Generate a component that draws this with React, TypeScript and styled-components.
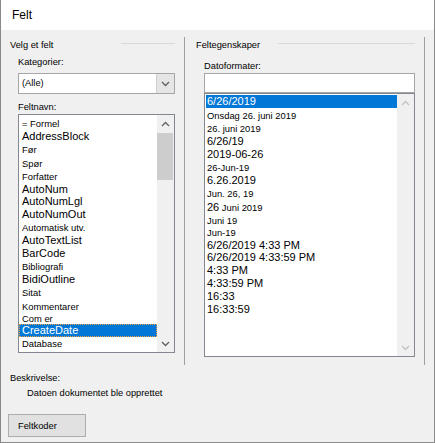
import React from "react";
import styled, { createGlobalStyle } from "styled-components";

const GlobalStyle = createGlobalStyle`
  html, body {
    margin: 0;
    padding: 0;
    background: #f0f0f0;
  }
  body {
    font-family: "Liberation Sans", Arial, sans-serif;
    color: #000;
  }
`;

type Item = { text: React.ReactNode; big?: boolean; h: number; selected?: boolean };

const fieldNames: Item[] = [
    { text: "= Formel", h: 12 },
    { text: "AddressBlock", big: true, h: 13 },
    { text: "Før", h: 14 },
    { text: "Spør", h: 13 },
    { text: "Forfatter", h: 13 },
    { text: "AutoNum", big: true, h: 12 },
    { text: "AutoNumLgl", big: true, h: 12 },
    { text: "AutoNumOut", big: true, h: 14 },
    { text: "Automatisk utv.", h: 13 },
    { text: "AutoTextList", big: true, h: 12 },
    { text: "BarCode", big: true, h: 14 },
    { text: "Bibliografi", h: 13 },
    { text: "BidiOutline", big: true, h: 13 },
    { text: "Sitat", h: 14 },
    { text: "Kommentarer", h: 13 },
    { text: "Com er", h: 11 },
    { text: "CreateDate", big: true, h: 13, selected: true },
    { text: "Database", h: 14 },
];

const dateFormats: Item[] = [
    { text: "6/26/2019", big: true, h: 13, selected: true },
    { text: "Onsdag 26. juni 2019", h: 15 },
    { text: "26. juni 2019", h: 12 },
    { text: "6/26/19", big: true, h: 12 },
    { text: "2019-06-26", big: true, h: 14 },
    { text: "26-Jun-19", h: 13 },
    { text: "6.26.2019", big: true, h: 13 },
    { text: "Jun. 26, 19", h: 13 },
    { text: <>26<SmallPart> Juni 2019</SmallPart></>, big: true, h: 14 },
    { text: "Juni 19", h: 13 },
    { text: "Jun-19", h: 12 },
    { text: "6/26/2019 4:33 PM", big: true, h: 12 },
    { text: "6/26/2019 4:33:59 PM", big: true, h: 13 },
    { text: "4:33 PM", big: true, h: 13 },
    { text: "4:33:59 PM", big: true, h: 13 },
    { text: "16:33", big: true, h: 13 },
    { text: "16:33:59", big: true, h: 13 },
];

function SmallPart({ children }: { children: React.ReactNode }) {
    return <Small>{children}</Small>;
}

const Chevron: React.FC<{ up?: boolean; color: string }> = ({ up, color }) => (
    <svg width="9" height="6" viewBox="0 0 9 6">
        <polyline
            points={up ? "1,5 4.5,1.5 8,5" : "1,1 4.5,4.5 8,1"}
            fill="none"
            stroke={color}
            strokeWidth="1.3"
        />
    </svg>
);

const App: React.FC = () => {
    return (
        <>
            <GlobalStyle/>
            <Window>
                <TitleBar>Felt</TitleBar>
                <Body>
                    <GroupRow>
                        <LeftGroup>
                            <GroupHeader>
                                <span>Velg et felt</span>
                                <HeaderLine $gap={68}/>
                            </GroupHeader>
                            <Field>
                                <Label $top={2}>Kategorier:</Label>
                                <Select>
                                    <SelectValue>(Alle)</SelectValue>
                                    <DropButton>
                                        <Chevron color="#606060"/>
                                    </DropButton>
                                </Select>
                                <Label $top={6}>Feltnavn:</Label>
                                <ListBox $height={239}>
                                    <Rows $padTop={3} $padLeft={0}>
                                        {fieldNames.map((item, i) => (
                                            <Row key={i} $h={item.h} $big={item.big} $selected={item.selected} $padLeft={3} $focus>
                                                {item.text}
                                            </Row>
                                        ))}
                                    </Rows>
                                    <ScrollBar>
                                        <ArrowBox><Chevron up color="#606060"/></ArrowBox>
                                        <Thumb/>
                                        <Spacer/>
                                        <ArrowBox><Chevron color="#606060"/></ArrowBox>
                                    </ScrollBar>
                                </ListBox>
                            </Field>
                        </LeftGroup>
                        <RightGroup>
                            <GroupHeader>
                                <span>Feltegenskaper</span>
                                <HeaderLine $gap={18}/>
                            </GroupHeader>
                            <Field>
                                <Label $top={6}>Datoformater:</Label>
                                <TextInput/>
                                <ListBox $height={264}>
                                    <Rows $padTop={1} $padLeft={1}>
                                        {dateFormats.map((item, i) => (
                                            <Row key={i} $h={item.h} $big={item.big} $selected={item.selected} $padLeft={1}>
                                                {item.text}
                                            </Row>
                                        ))}
                                    </Rows>
                                    <ScrollBar>
                                        <ArrowBox><Chevron up color="#c2c2c2"/></ArrowBox>
                                        <Spacer/>
                                        <ArrowBox><Chevron color="#c2c2c2"/></ArrowBox>
                                    </ScrollBar>
                                </ListBox>
                            </Field>
                        </RightGroup>
                    </GroupRow>
                    <DescLabel>Beskrivelse:</DescLabel>
                    <DescText>Datoen dokumentet ble opprettet</DescText>
                    <FieldCodesButton>Feltkoder</FieldCodesButton>
                </Body>
            </Window>
        </>
    );
};

const Window = styled.div`
  width: 435px;
  height: 443px;
  box-sizing: border-box;
  border: 1px solid #8a8a8a;
  border-top: 0;
  background: #f0f0f0;
  display: flex;
  flex-direction: column;
  overflow: hidden;
`;

const TitleBar = styled.div`
  height: 30px;
  flex-shrink: 0;
  background: #fff;
  padding-left: 11px;
  font-size: 12px;
  line-height: 30px;
`;

const Body = styled.div`
  padding-top: 7px;
  display: flex;
  flex-direction: column;
  font-size: 9.3px;
`;

const GroupRow = styled.div`
  display: flex;
  height: 328px;
  padding-left: 9px;
`;

const LeftGroup = styled.div`
  width: 175px;
  box-sizing: border-box;
  padding-right: 9px;
  border-right: 1px solid #a0a0a0;
`;

const RightGroup = styled.div`
  width: 240px;
  box-sizing: border-box;
  padding-left: 11px;
  padding-right: 9px;
  border-right: 1px solid #a0a0a0;
`;

const GroupHeader = styled.div`
  display: flex;
  height: 16px;
  line-height: 16px;
`;

const HeaderLine = styled.div<{ $gap: number }>`
  flex: 1;
  height: 1px;
  margin-top: 6px;
  margin-left: ${p => p.$gap}px;
  background: #d9d9d9;
`;

const Field = styled.div`
  display: flex;
  flex-direction: column;
  padding-left: 8px;
`;

const Label = styled.div<{ $top: number }>`
  height: 14px;
  line-height: 14px;
  margin-top: ${p => p.$top}px;
`;

const Select = styled.div`
  display: flex;
  height: 21px;
  margin-top: 4px;
  box-sizing: border-box;
  border: 1px solid #a6a6a6;
  background: #fff;
`;

const SelectValue = styled.div`
  flex: 1;
  padding-left: 3px;
  line-height: 19px;
`;

const DropButton = styled.div`
  width: 17px;
  background: #e5e5e5;
  border-left: 1px solid #d0d0d0;
  display: flex;
  align-items: center;
  justify-content: center;
`;

const TextInput = styled.div`
  height: 20px;
  box-sizing: border-box;
  border: 1px solid #a6a6a6;
  background: #fff;
`;

const ListBox = styled.div<{ $height: number }>`
  display: flex;
  height: ${p => p.$height}px;
  box-sizing: border-box;
  border: 1px solid #828790;
  background: #fff;
  overflow: hidden;
`;

const Rows = styled.div<{ $padTop: number; $padLeft: number }>`
  flex: 1;
  min-width: 0;
  padding-top: ${p => p.$padTop}px;
  padding-left: ${p => p.$padLeft}px;
  overflow: hidden;
`;

const Row = styled.div<{ $h: number; $big?: boolean; $selected?: boolean; $padLeft: number; $focus?: boolean }>`
  height: ${p => p.$h}px;
  line-height: ${p => p.$h}px;
  padding-left: ${p => p.$padLeft}px;
  box-sizing: border-box;
  white-space: nowrap;
  font-size: ${p => (p.$big ? 11 : 9.4)}px;
  background: ${p => (p.$selected ? "#0078d7" : "transparent")};
  color: ${p => (p.$selected ? "#fff" : "#000")};
  outline: ${p => (p.$selected && p.$focus ? "1px dotted #f5a040" : "none")};
  outline-offset: -1px;
`;

const Small = styled.span`
  font-size: 9.4px;
`;

const ScrollBar = styled.div`
  width: 17px;
  flex-shrink: 0;
  background: #f0f0f0;
  display: flex;
  flex-direction: column;
`;

const ArrowBox = styled.div`
  height: 17px;
  flex-shrink: 0;
  display: flex;
  align-items: center;
  justify-content: center;
`;

const Thumb = styled.div`
  height: 47px;
  margin: 1px 1px 0 0;
  background: #cdcdcd;
`;

const Spacer = styled.div`
  flex: 1;
`;

const DescLabel = styled.div`
  margin-top: 6px;
  padding-left: 9px;
  height: 14px;
  line-height: 14px;
`;

const DescText = styled.div`
  margin-top: 1px;
  padding-left: 26px;
  height: 14px;
  line-height: 14px;
`;

const FieldCodesButton = styled.button`
  margin: 14px 0 0 7px;
  width: 78px;
  height: 23px;
  box-sizing: border-box;
  border: 1px solid #adadad;
  background: #e1e1e1;
  font-family: "Liberation Sans", Arial, sans-serif;
  font-size: 9.3px;
  color: #000;
  text-align: left;
  padding: 0 0 0 9px;
`;

export default App;
